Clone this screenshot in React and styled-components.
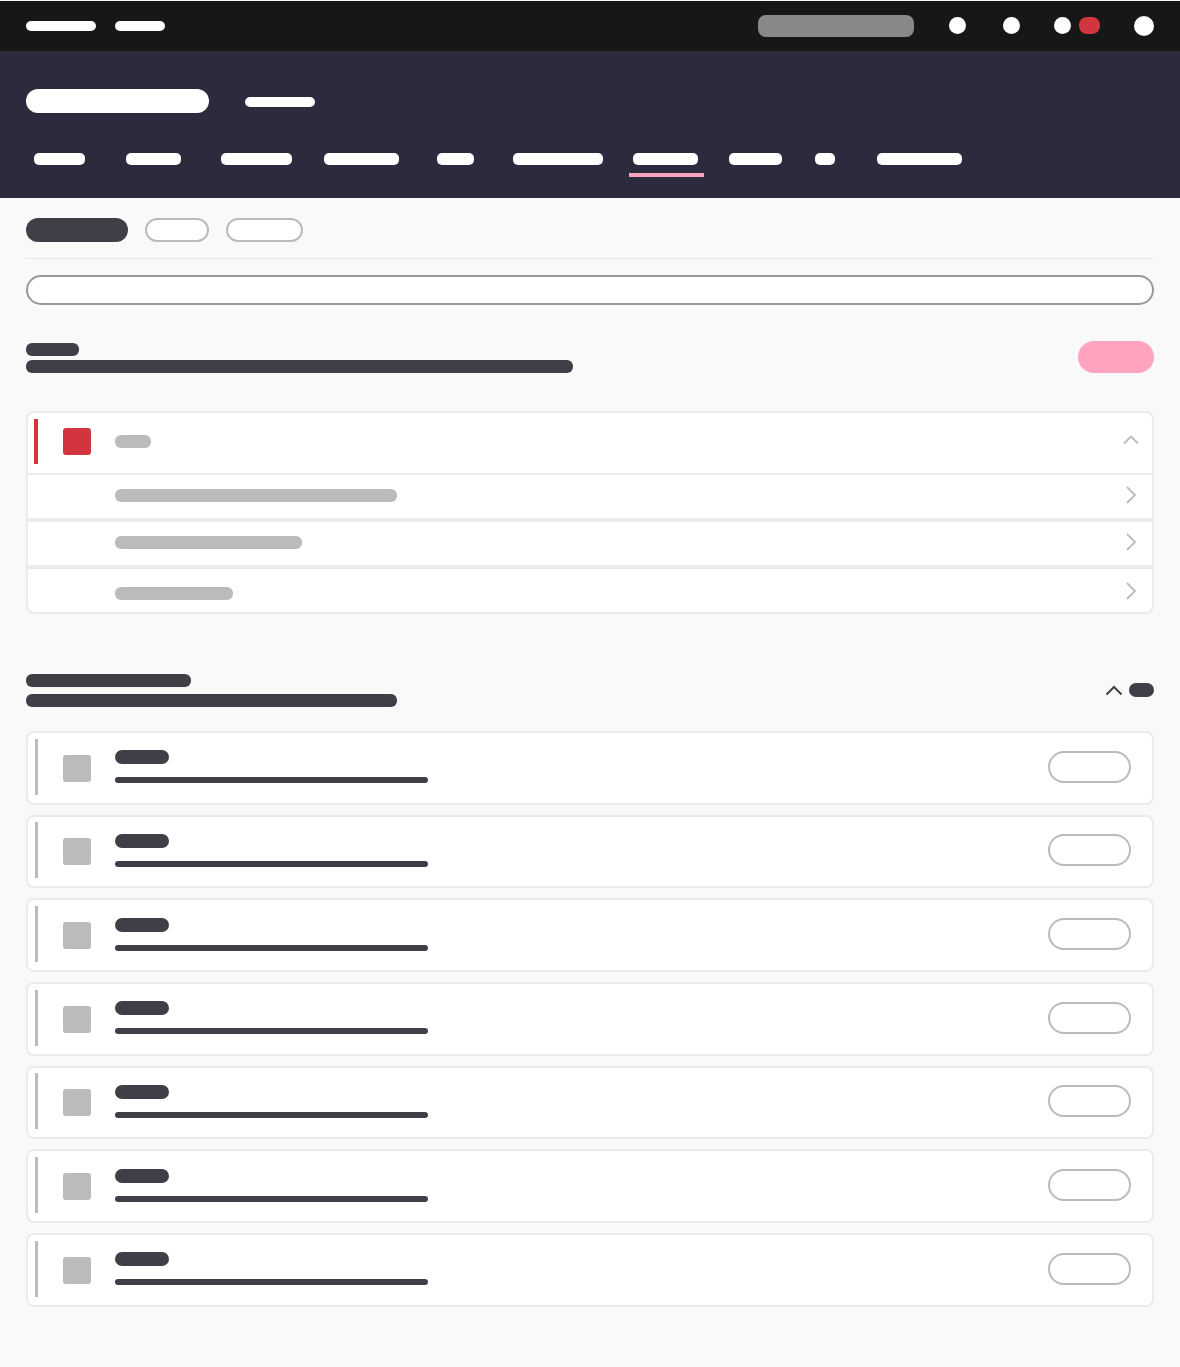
import React from "react";
import styled, { createGlobalStyle } from "styled-components";

const GlobalStyle = createGlobalStyle`
  * { box-sizing: border-box; }
  html, body { margin: 0; padding: 0; background: #f9f9f9; }
  body { font-family: "Liberation Sans", Arial, sans-serif; }
`;

const colors = {
  dark: "#3f3f47",
  gray: "#bbbbbb",
  white: "#ffffff",
  red: "#d3353f",
  pink: "#ffa3be",
  line: "#ebebeb",
};

const Page = styled.div`
  width: 1180px;
  min-height: 1367px;
  padding-top: 1px;
  background: #f9f9f9;
`;

const Bar = styled.div`
  flex: none;
  width: ${(p) => p.$w}px;
  height: ${(p) => p.$h || 13}px;
  border-radius: ${(p) => p.$r || 6}px;
  background: ${(p) => p.$color || colors.dark};
`;

const TopBar = styled.div`
  display: flex;
  align-items: center;
  height: 50px;
  padding: 0 26px;
  background: #171717;
`;

const TopLinks = styled.div`
  display: flex;
  gap: 19px;
`;

const SearchBox = styled.div`
  width: 156px;
  height: 22px;
  margin-left: auto;
  border-radius: 8px;
  background: #888888;
`;

const Dot = styled.div`
  width: 17px;
  height: 17px;
  margin: 0 0 2px ${(p) => p.$left}px;
  border-radius: 50%;
  background: ${colors.white};
`;

const Badge = styled.div`
  width: 21px;
  height: 17px;
  margin: 0 0 2px 8px;
  border-radius: 8px;
  background: ${colors.red};
`;

const Avatar = styled.div`
  width: 20px;
  height: 20px;
  margin: 0 0 1px 34px;
  border-radius: 50%;
  background: ${colors.white};
`;

const Header = styled.header`
  height: 147px;
  padding: 38px 0 0 26px;
  background: #2c2b3e;
`;

const TitleRow = styled.div`
  display: flex;
  align-items: center;
  gap: 36px;
`;

const TitleNote = styled(Bar)`
  margin-top: 2px;
`;

const Nav = styled.nav`
  display: flex;
  margin-top: 40px;
  padding-left: 8px;
`;

const NavItem = styled.div`
  position: relative;
  width: ${(p) => p.$w}px;
  height: 12px;
  margin-left: ${(p) => p.$left}px;
  border-radius: 5px;
  background: ${colors.white};

  &::after {
    content: "";
    display: ${(p) => (p.$active ? "block" : "none")};
    position: absolute;
    left: -4px;
    right: -6px;
    bottom: -12px;
    height: 4px;
    background: ${colors.pink};
  }
`;

const Content = styled.main`
  padding: 20px 26px 60px;
`;

const FilterRow = styled.div`
  display: flex;
  gap: 17px;
`;

const FilterPill = styled.div`
  width: ${(p) => p.$w}px;
  height: 24px;
  border-radius: 12px;
  border: ${(p) => (p.$active ? "none" : `2px solid ${colors.gray}`)};
  background: ${(p) => (p.$active ? colors.dark : colors.white)};
`;

const Divider = styled.hr`
  height: 1px;
  margin: 16px 0;
  border: none;
  background: #e3e3e3;
`;

const SearchInput = styled.div`
  height: 30px;
  border: 2px solid #999999;
  border-radius: 15px;
  background: ${colors.white};
`;

const SectionHead = styled.div`
  display: flex;
  justify-content: space-between;
  align-items: ${(p) => p.$align};
  margin-top: ${(p) => p.$top}px;
`;

const HeadText = styled.div`
  display: flex;
  flex-direction: column;
  gap: ${(p) => p.$gap}px;
`;

const PinkButton = styled.div`
  width: 76px;
  height: 32px;
  border-radius: 16px;
  background: ${colors.pink};
`;

const Card = styled.div`
  margin-top: 38px;
  border: 2px solid ${colors.line};
  border-radius: 8px;
  background: ${colors.white};
`;

const CardHead = styled.div`
  display: flex;
  align-items: center;
  height: 60px;
  padding: 0 12px 3px 6px;
`;

const Accent = styled.div`
  flex: none;
  width: ${(p) => p.$w}px;
  height: ${(p) => p.$h}px;
  background: ${(p) => p.$color};
`;

const Square = styled.div`
  flex: none;
  width: 27.5px;
  height: 27px;
  margin: ${(p) => p.$top || 0}px 24.5px 0 25px;
  border-radius: 3px;
  background: ${(p) => p.$color};
`;

const SubRow = styled.div`
  display: flex;
  justify-content: space-between;
  align-items: flex-start;
  height: ${(p) => p.$h}px;
  padding: ${(p) => p.$top}px 12px 0 87px;
  border-top: ${(p) => p.$line}px solid ${colors.line};
`;

const Chevron = styled.svg`
  flex: none;
  width: 18px;
  height: 18px;
  margin-left: auto;
  margin-top: ${(p) => p.$top || 0}px;
  fill: none;
  stroke: ${(p) => p.$color || colors.gray};
  stroke-width: ${(p) => p.$stroke || 1.8};
`;

const ToggleGroup = styled.div`
  display: flex;
  align-items: center;
  gap: 6px;
  margin-bottom: 2px;
`;

const ItemList = styled.div`
  display: flex;
  flex-direction: column;
  gap: 10px;
  margin-top: 24px;
`;

const ItemCard = styled.div`
  display: flex;
  align-items: center;
  height: 73.67px;
  padding: 0 21px 2px 7px;
  border: 2px solid ${colors.line};
  border-radius: 8px;
  background: ${colors.white};
`;

const ItemText = styled.div`
  display: flex;
  flex-direction: column;
  gap: 13px;
`;

const OutlineButton = styled.div`
  width: 83px;
  height: 32px;
  margin-left: auto;
  border: 2px solid ${colors.gray};
  border-radius: 16px;
  background: ${colors.white};
`;

const navItems = [
  { w: 51, left: 0 },
  { w: 55, left: 41 },
  { w: 71, left: 40 },
  { w: 75, left: 32 },
  { w: 37, left: 38 },
  { w: 90, left: 39 },
  { w: 65, left: 30, active: true },
  { w: 53, left: 31 },
  { w: 20, left: 33 },
  { w: 85, left: 42 },
];

const subRows = [
  { w: 282, top: 14, h: 45, line: 2, chevronTop: -3 },
  { w: 187, top: 14, h: 47, line: 4, chevronTop: -3 },
  { w: 118, top: 18, h: 47, line: 4, chevronTop: -5 },
];

const items = [1, 2, 3, 4, 5, 6, 7];

const App = () => (
  <Page>
    <GlobalStyle />
    <TopBar>
      <TopLinks>
        <Bar $w={70} $h={10} $r={5} $color={colors.white} />
        <Bar $w={50} $h={10} $r={5} $color={colors.white} />
      </TopLinks>
      <SearchBox />
      <Dot $left={35} />
      <Dot $left={37} />
      <Dot $left={34} />
      <Badge />
      <Avatar />
    </TopBar>

    <Header>
      <TitleRow>
        <Bar $w={183} $h={24} $r={12} $color={colors.white} />
        <TitleNote $w={70} $h={10} $r={5} $color={colors.white} />
      </TitleRow>
      <Nav>
        {navItems.map((item, index) => (
          <NavItem key={index} $w={item.w} $left={item.left} $active={item.active} />
        ))}
      </Nav>
    </Header>

    <Content>
      <FilterRow>
        <FilterPill $w={102} $active />
        <FilterPill $w={64} />
        <FilterPill $w={77} />
      </FilterRow>
      <Divider />
      <SearchInput />

      <SectionHead $top={36} $align="flex-end">
        <HeadText $gap={4}>
          <Bar $w={53} />
          <Bar $w={547} />
        </HeadText>
        <PinkButton />
      </SectionHead>

      <Card>
        <CardHead>
          <Accent $w={4} $h={45} $color={colors.red} />
          <Square $color={colors.red} />
          <Bar $w={36} $color={colors.gray} />
          <Chevron viewBox="0 0 18 18">
            <path d="M2 10.5 L9 3.5 L16 10.5" />
          </Chevron>
        </CardHead>
        {subRows.map((row, index) => (
          <SubRow key={index} $top={row.top} $h={row.h} $line={row.line}>
            <Bar $w={row.w} $color={colors.gray} />
            <Chevron viewBox="0 0 18 18" $top={row.chevronTop}>
              <path d="M5 1 L13 9 L5 17" />
            </Chevron>
          </SubRow>
        ))}
      </Card>

      <SectionHead $top={60} $align="center">
        <HeadText $gap={7}>
          <Bar $w={165} />
          <Bar $w={371} />
        </HeadText>
        <ToggleGroup>
          <Chevron viewBox="0 0 18 18" $color={colors.dark} $stroke={2}>
            <path d="M1.5 13.5 L9 6 L16.5 13.5" />
          </Chevron>
          <Bar $w={25} $h={14} $r={7} />
        </ToggleGroup>
      </SectionHead>

      <ItemList>
        {items.map((item) => (
          <ItemCard key={item}>
            <Accent $w={3} $h={56} $color={colors.gray} />
            <Square $color={colors.gray} $top={3} />
            <ItemText>
              <Bar $w={54} $h={14} $r={7} />
              <Bar $w={313} $h={6} $r={3} />
            </ItemText>
            <OutlineButton />
          </ItemCard>
        ))}
      </ItemList>
    </Content>
  </Page>
);

export default App;
